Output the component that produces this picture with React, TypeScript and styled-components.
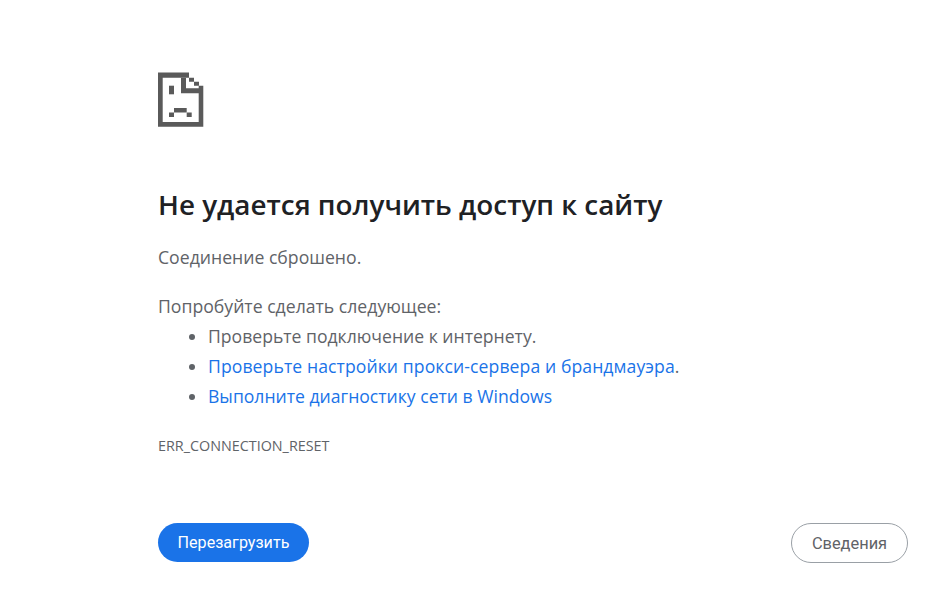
import React from "react";
import styled, { createGlobalStyle } from "styled-components";

const Global = createGlobalStyle`
  html, body { margin: 0; padding: 0; background: #fff; }
  body { font-family: "Open Sans", "Noto Sans", sans-serif; overflow: hidden; }
`;
const Page = styled.main`
  width: 937px;
  height: 589px;
  box-sizing: border-box;
  padding: 72px 29px 0 158px;
  display: flex;
  flex-direction: column;
`;
const Icon = styled.svg`
  display: block;
  width: 46px;
  height: 56px;
  fill: #5a5a5a;
`;
const Title = styled.h1`
  margin: 58px 0 0;
  font-size: 27.85px;
  line-height: 36px;
  font-weight: 600;
  color: #202124;
`;
const Message = styled.p`
  margin: 20px 0 0;
  font-size: 17.65px;
  line-height: 30px;
  color: #5f6368;
`;
const Hint = styled(Message)`
  margin-top: 19px;
`;
const Tips = styled.ul`
  margin: 0;
  padding: 0 0 0 50px;
  font-size: 17.6px;
  line-height: 30px;
  color: #5f6368;
`;
const TipLink = styled.a<{ $tracking?: number }>`
  color: #1a73e8;
  text-decoration: none;
  letter-spacing: ${(p) => p.$tracking ?? 0}px;
`;
const Code = styled.div`
  margin-top: 25px;
  font-size: 14.35px;
  line-height: 20px;
  color: #5f6368;
`;
const Buttons = styled.div`
  margin-top: 67px;
  display: flex;
  justify-content: space-between;
  align-items: flex-start;
`;
const Reload = styled.button`
  height: 39px;
  width: 151px;
  border: 0;
  border-radius: 20px;
  background: #1a73e8;
  color: #fff;
  font: 400 16.1px "Roboto", sans-serif;
`;
const Details = styled.button`
  height: 40px;
  width: 117px;
  border: 1px solid #9aa0a6;
  border-radius: 20px;
  background: #fff;
  color: #5f6368;
  font: 400 16.4px "Roboto", sans-serif;
`;

export default function App() {
  return (
    <Page>
      <Global />
      <Icon viewBox="0 0 46 56" aria-hidden="true">
        <path d="M0 .5h31v5.200H4.700v44.300h36V13.700H45.300V54.700H0z" />
        <path d="M23 5.700h5v10.600h13v5H23z" />
        <path d="M31 5.700h5v4h-5zM36 9.700h5v4h-5z" />
        <rect x="11" y="13.700" width="5" height="8.600" />
        <rect x="16" y="36" width="12.700" height="4.500" />
        <rect x="11" y="40.500" width="5" height="4.500" />
        <rect x="28.700" y="40.500" width="5" height="4.500" />
      </Icon>
      <Title>Не удается получить доступ к сайту</Title>
      <Message>Соединение сброшено.</Message>
      <Hint>Попробуйте сделать следующее:</Hint>
      <Tips>
        <li>Проверьте подключение к интернету.</li>
        <li><TipLink $tracking={0.09}>Проверьте настройки прокси-сервера и брандмауэра</TipLink>.</li>
        <li><TipLink>Выполните диагностику сети в Windows</TipLink></li>
      </Tips>
      <Code>ERR_CONNECTION_RESET</Code>
      <Buttons>
        <Reload>Перезагрузить</Reload>
        <Details>Сведения</Details>
      </Buttons>
    </Page>
  );
}
